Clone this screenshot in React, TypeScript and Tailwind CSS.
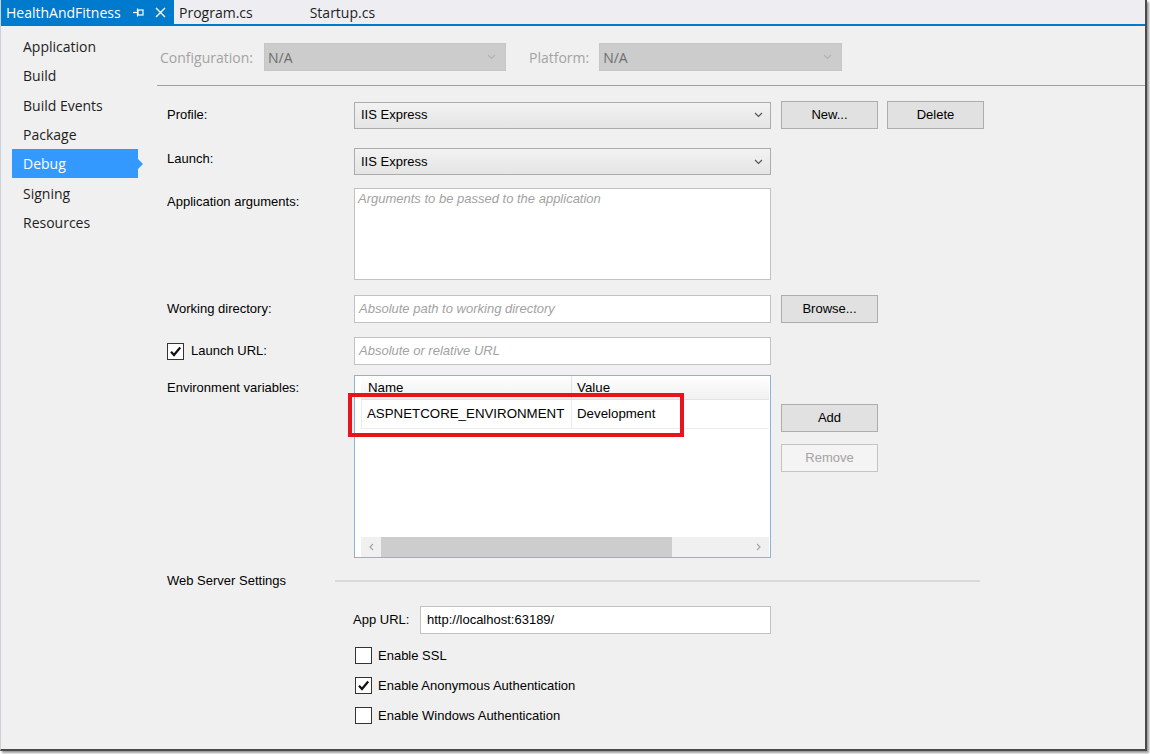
import type { ReactNode } from 'react';

const ui = "font-['Open_Sans',sans-serif]";
const win = "font-['Liberation_Sans',Arial,sans-serif]";

const navItems = ['Application', 'Build', 'Build Events', 'Package', 'Debug', 'Signing', 'Resources'];

function Chevron({ color = '#555' }: { color?: string }) {
	return (
		<svg width="9" height="6" viewBox="0 0 9 6" className="shrink-0">
			<polyline points="1,1 4.5,4.5 8,1" fill="none" stroke={color} strokeWidth="1.2" />
		</svg>
	);
}

function Check() {
	return (
		<svg width="13" height="13" viewBox="0 0 13 13">
			<path d="M2 6.8 L5 10 L11.2 2.5" fill="none" stroke="#111" strokeWidth="2.2" />
		</svg>
	);
}

function Select({ value }: { value: string }) {
	return (
		<div className="flex h-[27px] w-[417px] items-center justify-between border border-[#acacac] bg-gradient-to-b from-[#f2f2f2] to-[#e5e5e5] pl-[6px] pr-[7px]">
			<span className="text-[13px] text-black">{value}</span>
			<Chevron />
		</div>
	);
}

function Button({ children, disabled }: { children: ReactNode; disabled?: boolean }) {
	return (
		<div
			className={
				disabled
					? 'flex h-[28px] w-[97px] items-center justify-center border border-[#c4c4c4] bg-[#f4f4f4] text-[13px] text-[#a3a3a3]'
					: 'flex h-[28px] w-[97px] items-center justify-center border border-[#adadad] bg-[#e1e1e1] text-[13px] text-black'
			}
		>
			{children}
		</div>
	);
}

function Input({ placeholder, value, className }: { placeholder?: string; value?: string; className?: string }) {
	return (
		<div className={`flex h-[28px] items-center border border-[#c2c2c2] bg-white px-[4px] text-[13px] ${className ?? 'w-[417px]'}`}>
			{value ? (
				<span className="text-black">{value}</span>
			) : (
				<span className="italic text-[#a2a2a2]">{placeholder}</span>
			)}
		</div>
	);
}

function CheckBox({ checked }: { checked?: boolean }) {
	return (
		<div className="flex h-[17px] w-[17px] shrink-0 items-center justify-center border border-[#333] bg-white">
			{checked && <Check />}
		</div>
	);
}

function Label({ children, className }: { children: ReactNode; className?: string }) {
	return <div className={`w-[187px] shrink-0 text-[13px] text-black ${className ?? ''}`}>{children}</div>;
}

export default function App() {
	return (
		<div className="h-[754px] w-[1150px] overflow-hidden bg-white">
			<div className="flex h-[751px] w-[1147px] flex-col border-b-2 border-l border-r-2 border-b-[#4a4a4a] border-l-[#cfcfd8] border-r-[#4a4a4a] bg-[#f0f0f0] shadow-[2px_2px_2px_rgba(0,0,0,0.4)]">
				{/* tab strip */}
				<div className={`flex h-[24px] shrink-0 items-center bg-[#eeeef2] text-[14px] ${ui}`}>
					<div className="flex h-full w-[173px] items-center bg-[#007acc] pl-[5px] text-white">
						<span>HealthAndFitness</span>
						<svg width="12" height="9" viewBox="0 0 12 9" className="ml-[12px]">
							<line x1="0" y1="4.5" x2="4" y2="4.5" stroke="white" strokeWidth="1.2" />
							<line x1="4.5" y1="0.5" x2="4.5" y2="8.5" stroke="white" strokeWidth="1.2" />
							<rect x="5" y="2" width="5" height="5" fill="none" stroke="white" strokeWidth="1.2" />
						</svg>
						<svg width="11" height="11" viewBox="0 0 11 11" className="ml-[10px]">
							<path d="M1 1 L10 10 M10 1 L1 10" stroke="white" strokeWidth="1.4" />
						</svg>
					</div>
					<span className="ml-[5px] text-[#1e1e1e]">Program.cs</span>
					<span className="ml-[57px] text-[#1e1e1e]">Startup.cs</span>
				</div>
				<div className="h-[2px] shrink-0 bg-[#007acc]" />

				<div className="flex flex-1">
					{/* sidebar */}
					<div className={`w-[156px] shrink-0 pt-[6px] text-[14px] text-[#1e1e1e] ${ui}`}>
						{navItems.map((item) =>
							item === 'Debug' ? (
								<div key={item} className="flex h-[29.3px] items-center">
									<div className="ml-[11px] flex h-[29px] w-[126px] items-center bg-[#3399ff] pl-[11px] text-white">
										{item}
									</div>
									<svg width="5" height="10" viewBox="0 0 5 10">
										<polygon points="0,0 5,5 0,10" fill="#3399ff" />
									</svg>
								</div>
							) : (
								<div key={item} className="flex h-[29.3px] items-center pl-[22px]">
									{item}
								</div>
							)
						)}
					</div>

					{/* main panel */}
					<div className="flex flex-1 flex-col">
						<div className={`flex items-center pl-[3px] pt-[17px] text-[14px] ${ui}`}>
							<span className="text-[#a3a3a3]">Configuration:</span>
							<div className="ml-[11px] flex h-[28px] w-[242px] items-center justify-between border border-[#c6c6c6] bg-[#cccccc] pl-[3px] pr-[9px]">
								<span className="text-[#6e6e6e]">N/A</span>
								<Chevron color="#b3b3b3" />
							</div>
							<span className="ml-[23px] text-[#a3a3a3]">Platform:</span>
							<div className="ml-[10px] flex h-[28px] w-[243px] items-center justify-between border border-[#c6c6c6] bg-[#cccccc] pl-[3px] pr-[9px]">
								<span className="text-[#6e6e6e]">N/A</span>
								<Chevron color="#b3b3b3" />
							</div>
						</div>
						<div className="mt-[14px] h-px bg-[#a0a0a0]" />

						<div className={`flex flex-col pl-[10px] ${win}`}>
							<div className="mt-[15px] flex items-center">
								<Label>Profile:</Label>
								<Select value="IIS Express" />
								<div className="ml-[10px]">
									<Button>New...</Button>
								</div>
								<div className="ml-[9px]">
									<Button>Delete</Button>
								</div>
							</div>

							<div className="mt-[19px] flex items-center">
								<Label className="-mt-[6px]">Launch:</Label>
								<Select value="IIS Express" />
							</div>

							<div className="mt-[13px] flex items-start">
								<Label className="pt-[4px]">Application arguments:</Label>
								<div className="h-[92px] w-[417px] border border-[#c2c2c2] bg-white px-[3px] text-[13px] italic text-[#a2a2a2]">
									Arguments to be passed to the application
								</div>
							</div>

							<div className="mt-[15px] flex items-center">
								<Label>Working directory:</Label>
								<Input placeholder="Absolute path to working directory" />
								<div className="ml-[10px]">
									<Button>Browse...</Button>
								</div>
							</div>

							<div className="mt-[14px] flex items-center">
								<div className="flex w-[187px] shrink-0 items-center gap-[7px] text-[13px]">
									<CheckBox checked />
									<span>Launch URL:</span>
								</div>
								<Input placeholder="Absolute or relative URL" />
							</div>

							<div className="mt-[10px] flex items-start">
								<Label className="pt-[3px]">Environment variables:</Label>
								<div className="relative flex h-[183px] w-[417px] flex-col border border-[#8fb1d6] bg-white text-[13.3px]">
									<div className="flex h-[24px] pl-[6px] pr-px">
										<div className="flex flex-1 border-b border-[#e2e2e2] bg-gradient-to-b from-white to-[#f1f1f1]">
											<div className="flex w-[210px] items-end pb-px pl-[7px]">Name</div>
											<div className="flex flex-1 items-end border-l border-[#e2e2e2] pb-px pl-[5px]">Value</div>
										</div>
									</div>
									<div className="flex h-[29px] pl-[6px] pr-px">
										<div className="flex flex-1 border-b border-l border-[#ececec]">
											<div className="flex w-[209px] items-center pl-[5px]">ASPNETCORE_ENVIRONMENT</div>
											<div className="flex flex-1 items-center border-l border-[#ececec] pl-[5px]">Development</div>
										</div>
									</div>
									<div className="flex-1" />
									<div className="flex h-[20px] pl-[6px] pr-px">
										<div className="flex flex-1 items-center bg-[#f0f0f0]">
											<svg width="20" height="20" viewBox="0 0 20 20">
												<polyline points="12,7 9,10 12,13" fill="none" stroke="#a6a6a6" strokeWidth="1.2" />
											</svg>
											<div className="h-[20px] w-[291px] bg-[#cdcdcd]" />
											<div className="flex-1" />
											<svg width="20" height="20" viewBox="0 0 20 20">
												<polyline points="8,7 11,10 8,13" fill="none" stroke="#a6a6a6" strokeWidth="1.2" />
											</svg>
										</div>
									</div>
									<div className="absolute left-[-7px] top-[17px] h-[44px] w-[336px] border-4 border-[#e8141c]" />
								</div>
								<div className="ml-[10px] mt-[29px] flex flex-col gap-[12px]">
									<Button>Add</Button>
									<Button disabled>Remove</Button>
								</div>
							</div>

							<div className="mt-[15px] flex h-[16px] items-center">
								<div className="w-[168px] shrink-0 text-[13px]">Web Server Settings</div>
								<div className="h-[2px] w-[645px] bg-[#d9d9d9]" />
							</div>

							<div className="ml-[186px] mt-[17px] flex items-center text-[13px]">
								<span className="w-[67px]">App URL:</span>
								<Input value="http://localhost:63189/" className="w-[351px] px-[6px]" />
							</div>

							{[
								['Enable SSL', false],
								['Enable Anonymous Authentication', true],
								['Enable Windows Authentication', false],
							].map(([label, checked]) => (
								<div key={label as string} className="ml-[188px] mt-[13px] flex h-[17px] items-center gap-[6px] text-[13px]">
									<CheckBox checked={checked as boolean} />
									<span>{label as string}</span>
								</div>
							))}
						</div>
					</div>
				</div>
			</div>
		</div>
	);
}
